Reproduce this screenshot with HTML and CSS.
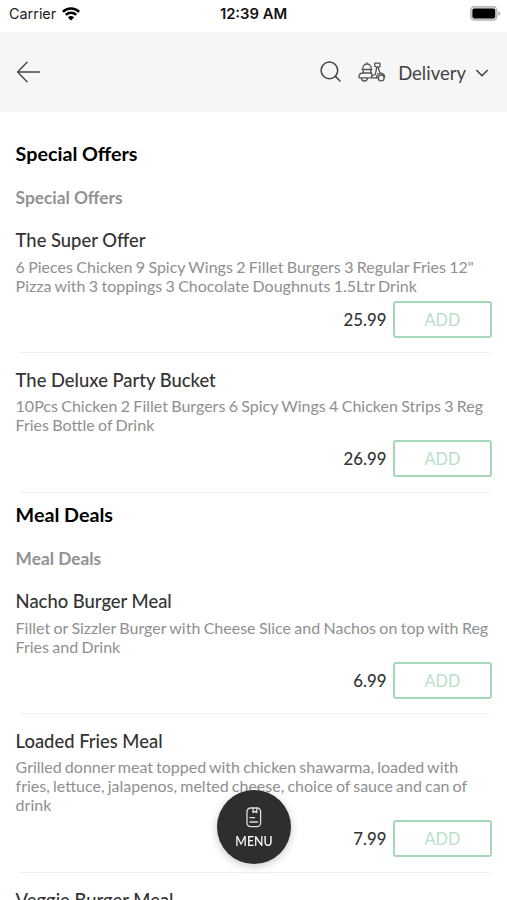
FILE: index.html
```html
<!DOCTYPE html>
<html lang="en">
<head>
<meta charset="utf-8">
<title>Menu</title>
<link rel="stylesheet" href="styles.css">
</head>
<body>
<div class="status">
  <div class="carrier"><span>Carrier</span>
    <svg width="18" height="14" viewBox="0 0 18 14" fill="none" stroke="#000" stroke-width="2.5"><path d="M.9 4.9a11.5 11.5 0 0 1 16.2 0M3.8 7.9a7.4 7.4 0 0 1 10.4 0"/><path d="M9 13.6 5.9 10.4a4.4 4.4 0 0 1 6.2 0Z" fill="#000" stroke="none"/></svg>
  </div>
  <div class="time">12:39 AM</div>
  <svg class="battery" width="31" height="15" viewBox="0 0 31 15"><rect x=".8" y=".8" width="26" height="13.2" rx="3.6" fill="#ddd" stroke="#b5b5b5" stroke-width="1.4"/><rect x="2.4" y="2.4" width="22.8" height="10" rx="2" fill="#000"/><path d="M28.4 5v5q1.8-.9 1.8-2.5T28.4 5Z" fill="#aaa"/></svg>
</div>
<header class="bar">
  <svg class="back" width="26" height="24" viewBox="0 0 26 24" fill="none" stroke="#454545" stroke-width="1.4" stroke-linecap="round" stroke-linejoin="round"><path d="M23.4 12H1.6M11 2.2 1.6 12l9.4 9.8"/></svg>
  <svg class="search" width="22" height="22" viewBox="0 0 22 22" fill="none" stroke="#454545" stroke-width="1.5" stroke-linecap="round"><circle cx="9.4" cy="9.4" r="8.3"/><path d="m15.4 15.4 4.6 4.6"/></svg>
  <svg class="scooter" width="28" height="20" viewBox="0 0 28 20" fill="none" stroke="#555" stroke-width="1.3" stroke-linejoin="round" stroke-linecap="round"><path d="M4.8 7.4V6.2a4.2 4.2 0 0 1 8.4 0v1.2M9 2V.9M4.1 7.5h9.8M5.2 7.6v3.2M12.8 7.6v3.2"/><path d="M4.3 11h9.4v4.8H1V14q.5-2.6 3.3-3M3.4 16a3 3 0 0 0 6 0M9.4 15.8h10.8"/><path d="M16.8 1.2h5.1v3.6h-2.1l2.1 6.2q4.7.6 4.8 4.1M16.8 1.2v3.1l2 .7-1.5 7.5-3 1.2M21.9 11q-3 1.1-3.6 4.8"/><circle cx="23.2" cy="15.9" r="2.9"/></svg>
  <span class="mode">Delivery</span>
  <svg class="chevron" width="14" height="9" viewBox="0 0 14 9" fill="none" stroke="#454545" stroke-width="1.6" stroke-linecap="round" stroke-linejoin="round"><path d="m1.8 1.5 5.2 5.2 5.2-5.2"/></svg>
</header>
<main>
  <section>
    <h1>Special Offers</h1>
    <h2>Special Offers</h2>
    <article><h3>The Super Offer</h3>
      <p>6 Pieces Chicken 9 Spicy Wings 2 Fillet Burgers 3 Regular Fries 12"<br>Pizza with 3 toppings 3 Chocolate Doughnuts 1.5Ltr Drink</p>
      <div class="buy"><span>25.99</span><button>ADD</button></div></article>
    <article><h3>The Deluxe Party Bucket</h3>
      <p>10Pcs Chicken 2 Fillet Burgers 6 Spicy Wings 4 Chicken Strips 3 Reg<br>Fries Bottle of Drink</p>
      <div class="buy"><span>26.99</span><button>ADD</button></div></article>
  </section>
  <section>
    <h1>Meal Deals</h1>
    <h2>Meal Deals</h2>
    <article><h3>Nacho Burger Meal</h3>
      <p>Fillet or Sizzler Burger with Cheese Slice and Nachos on top with Reg<br>Fries and Drink</p>
      <div class="buy"><span>6.99</span><button>ADD</button></div></article>
    <article><h3>Loaded Fries Meal</h3>
      <p class="tight">Grilled donner meat topped with chicken shawarma, loaded with<br>fries, lettuce, jalapenos, melted cheese, choice of sauce and can of<br>drink</p>
      <div class="buy"><span>7.99</span><button>ADD</button></div></article>
    <article><h3>Veggie Burger Meal</h3></article>
  </section>
</main>
<div class="fab">
  <svg width="16" height="21" viewBox="0 0 16 21" fill="none" stroke="#ddd" stroke-width="1.3" stroke-linecap="round" stroke-linejoin="round"><rect x="1" y="1" width="13.6" height="18.6" rx="3.6"/><path d="M7 1.2v4.4l1.9-1.3 1.9 1.3V1.2M4 10.6h4.6M4 15h7.6"/></svg>
  <span>MENU</span>
</div>
</body>
</html>
```
FILE: styles.css
```css
* { box-sizing: border-box; }
body { margin: 0; height: 900px; overflow: hidden; background: #fff; font-family: Lato, sans-serif; }
svg { display: block; flex: none; }
.status { height: 32px; padding: 0 6px 5px 9px; display: grid; grid-template-columns: 1fr auto 1fr; align-items: center; font-family: Inter, sans-serif; font-size: 14.4px; color: #222; }
.carrier { display: flex; align-items: center; gap: 6px; }
.time { font-weight: 600; font-size: 14.8px; color: #111; margin-right: 3px; }
.battery { justify-self: end; }
.bar { height: 80px; background: #f6f6f6; display: flex; align-items: center; padding: 0 18px 0 16px; color: #444; }
.search { margin-left: auto; }
.scooter { margin-left: 16px; }
.mode { margin-left: 12px; padding-top: 1px; font-size: 18.5px; line-height: 24px; }
.chevron { margin: 3px 0 0 9px; }
main { padding: 28px 15px 0 15.6px; white-space: nowrap; }
h1, h2, h3, p { margin: 0; }
h1 { font-size: 19.7px; line-height: 27px; padding-bottom: 1px; font-weight: 700; color: #000; }
h2 { margin: 18px 0; font-size: 17.3px; line-height: 24px; font-weight: 700; color: #929292; }
section + section { margin-top: 8px; }
article::after { content: ""; display: block; height: 1px; margin: 14px 2px 0 4px; background: #efefef; }
h3 { font-size: 18.4px; line-height: 24px; font-weight: 500; color: #333; }
p { margin-top: 5px; font-size: 16px; line-height: 19px; word-spacing: -.75px; color: #8f8f8f; }
.tight { word-spacing: -1px; }
article + article { margin-top: 15px; }
article + article p { margin-top: 4px; }
article + article::after { margin-top: 15px; }
.buy { margin-top: 6px; display: flex; justify-content: flex-end; align-items: center; gap: 6.5px; font-size: 16.8px; font-weight: 500; color: #333; }
button { width: 99px; height: 37px; padding: 0; border: 2px solid #a5d8b8; border-radius: 3px; background: #fff; color: #b9dfc8; font: 16.3px Lato, sans-serif; }
.fab { position: fixed; left: 217px; top: 790px; width: 74px; height: 74px; border-radius: 50%; background: #2e2e2e; box-shadow: 0 2px 8px rgba(0,0,0,.22); display: flex; flex-direction: column; align-items: center; padding-top: 17px; color: #fff; font-size: 12.4px; font-weight: 500; line-height: 18px; }
.fab span { margin-top: 5px; }
```
